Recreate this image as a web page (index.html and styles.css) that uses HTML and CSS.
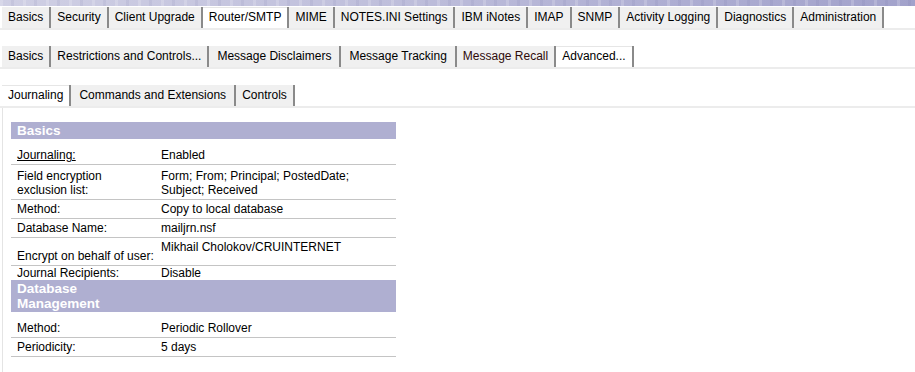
FILE: index.html
```html
<!DOCTYPE html>
<html lang="en">

<head>
    <meta charset="UTF-8">
    <meta name="viewport" content="width=device-width, initial-scale=1.0">
    <title>Router/SMTP - Journaling</title>
    <link rel="stylesheet" href="styles.css">
</head>

<body>
    <div class="banner"></div>

    <ul class="tabs">
        <li><a href="#">Basics</a></li>
        <li><a href="#">Security</a></li>
        <li><a href="#">Client Upgrade</a></li>
        <li class="active"><a href="#">Router/SMTP</a></li>
        <li><a href="#">MIME</a></li>
        <li><a href="#">NOTES.INI Settings</a></li>
        <li><a href="#">IBM iNotes</a></li>
        <li><a href="#">IMAP</a></li>
        <li><a href="#">SNMP</a></li>
        <li><a href="#">Activity Logging</a></li>
        <li><a href="#">Diagnostics</a></li>
        <li><a href="#">Administration</a></li>
    </ul>

    <ul class="tabs">
        <li><a href="#">Basics</a></li>
        <li><a href="#">Restrictions and Controls...</a></li>
        <li><a href="#" class="wide">Message Disclaimers</a></li>
        <li><a href="#" class="wide">Message Tracking</a></li>
        <li><a href="#" class="visited">Message Recall</a></li>
        <li class="active"><a href="#">Advanced...</a></li>
    </ul>

    <ul class="tabs">
        <li class="active"><a href="#">Journaling</a></li>
        <li><a href="#" class="wide">Commands and Extensions</a></li>
        <li><a href="#">Controls</a></li>
    </ul>

    <div class="panel">
        <div class="section">
            <div class="section-title">Basics</div>
            <div class="row first">
                <div class="label"><a href="#">Journaling:</a></div>
                <div class="value">Enabled</div>
            </div>
            <div class="row tall">
                <div class="label">Field encryption<br>exclusion list:</div>
                <div class="value">Form; From; Principal; PostedDate; Subject; Received</div>
            </div>
            <div class="row">
                <div class="label">Method:</div>
                <div class="value">Copy to local database</div>
            </div>
            <div class="row">
                <div class="label">Database Name:</div>
                <div class="value">mailjrn.nsf</div>
            </div>
            <div class="row encrypt">
                <div class="label">Encrypt on behalf of user:</div>
                <div class="value">Mikhail Cholokov/CRUINTERNET</div>
            </div>
            <div class="row flush">
                <div class="label">Journal Recipients:</div>
                <div class="value">Disable</div>
            </div>

            <div class="section-title">Database<br>Management</div>
            <div class="row first">
                <div class="label">Method:</div>
                <div class="value">Periodic Rollover</div>
            </div>
            <div class="row">
                <div class="label">Periodicity:</div>
                <div class="value">5 days</div>
            </div>
        </div>
    </div>
</body>

</html>
```

FILE: styles.css
```css
* {
    margin: 0;
    padding: 0;
    box-sizing: border-box;
}

body {
    font-family: "Liberation Sans", Arial, sans-serif;
    font-size: 12px;
    color: #000;
    background-color: #fff;
    overflow: hidden;
}

.banner {
    height: 6px;
    margin-bottom: 1px;
    background:
        repeating-linear-gradient(90deg, rgba(255, 255, 255, 0.18) 0 3px, transparent 3px 11px, rgba(80, 80, 140, 0.08) 11px 14px, transparent 14px 23px),
        linear-gradient(90deg, #cfcfe4, #c0c0dc 40%, #adadd2 75%, #a2a2cb);
}

.tabs {
    display: flex;
    list-style: none;
    padding-left: 2px;
    border-bottom: 2px solid #ececec;
    margin-bottom: 16px;
}

.tabs:last-of-type {
    margin-bottom: 0;
}

.tabs li a {
    display: block;
    height: 21px;
    line-height: 21px;
    padding: 0 6px;
    background-color: #f0f0f0;
    border-right: 2px solid #8a8a8a;
    color: #000;
    text-decoration: none;
}

.tabs li a.wide {
    padding: 0 8px;
}

.tabs li a.visited {
    color: #2e0a0a;
}

.tabs li.active a {
    background-color: #fff;
    box-shadow: inset 0 1px 0 #e6e6e6;
}

.panel {
    margin-left: 2px;
    border-left: 1px solid #e4e4e4;
    padding: 14px 0 0 8px;
    height: calc(100vh - 108px);
}

.section {
    width: 385px;
}

.section-title {
    background-color: #afafd1;
    color: #fff;
    font-weight: bold;
    font-size: 13.5px;
    line-height: 15px;
    padding: 1px 6px;
}

.row {
    display: grid;
    grid-template-columns: 150px 1fr;
    line-height: 14px;
    border-bottom: 1px solid #c4c4c4;
}

.row .label {
    padding: 2px 4px 2px 6px;
}

.row .label a {
    color: #000;
    text-decoration: underline;
}

.row .value {
    padding: 2px 10px 2px 0;
}

.row.first {
    margin-top: 7px;
}

.row.tall .label,
.row.tall .value {
    padding-top: 4px;
}

.row.encrypt .label {
    padding-top: 11px;
}

.row.encrypt .value {
    padding-top: 2px;
}

.row.flush {
    border-bottom: none;
}

.row.flush .label,
.row.flush .value {
    padding-top: 0;
    padding-bottom: 0;
}
```
